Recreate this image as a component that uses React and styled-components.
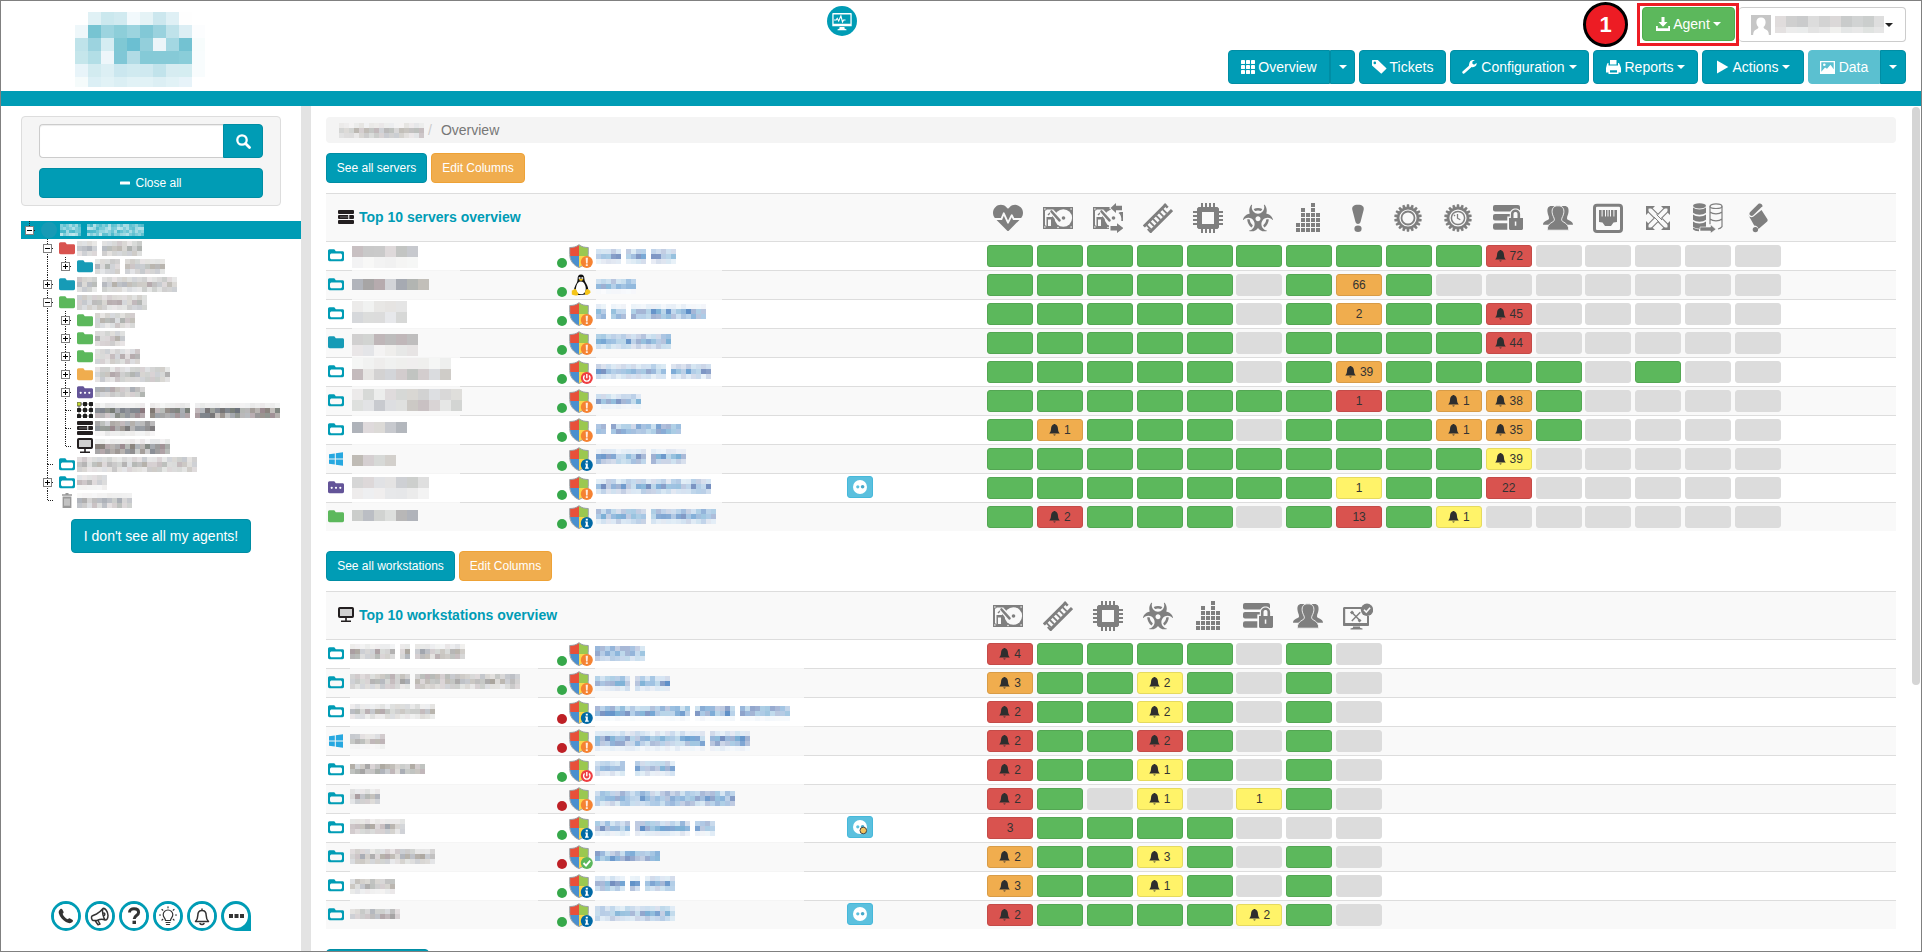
import React from 'react';
import styled, { createGlobalStyle } from 'styled-components';
import { FaHeartbeat, FaBiohazard } from 'react-icons/fa';

const TEAL = '#009cb5';
const TEAL_EDGE = '#008da4';
const INK = '#7f7f7f';
const PAPER = '#f9f9f9';

const GlobalStyle = createGlobalStyle`
  *, *::before, *::after { box-sizing: border-box; }
  html, body { margin: 0; padding: 0; background: #fff; overflow: hidden; }
  body { font-family: "Liberation Sans", Arial, sans-serif; font-size: 14px; line-height: 20px; color: #333; }
  svg { display: block; flex: none; }
`;

/* ---------- page frame ---------- */
const Page = styled.div`
  width: 1922px;
  height: 952px;
  border: 1px solid #808080;
  display: flex;
  flex-direction: column;
  overflow: hidden;
`;
const Header = styled.header`
  height: 90px;
  flex: none;
  display: flex;
  justify-content: space-between;
  padding: 0 15px 0 74px;
`;
const LogoSlot = styled.div` padding-top: 11px; width: 752px; `;
const StatusDisc = styled.div`
  width: 30px;
  height: 30px;
  margin-top: 5px;
  border-radius: 50%;
  background: ${TEAL};
  display: flex;
  align-items: center;
  justify-content: center;
`;
const HeaderRight = styled.div`
  margin-left: auto;
  display: flex;
  flex-direction: column;
  align-items: flex-end;
`;
const TopLine = styled.div`
  display: flex;
  height: 49px;
  align-items: flex-start;
  padding-top: 1px;
`;
const NavLine = styled.nav` display: flex; gap: 4px; `;
const Band = styled.div` height: 15px; flex: none; background: ${TEAL}; `;
const Body = styled.div` flex: 1; min-height: 0; display: flex; `;

/* ---------- buttons ---------- */
const tones = {
  teal: [TEAL, TEAL_EDGE, '#fff'],
  light: ['#5bc0d0', '#5bc0d0', '#fff'],
  orange: ['#f0ad4e', '#eea236', '#fff'],
  green: ['#5cb85c', '#4cae4c', '#fff'],
};
const Button = styled.button`
  display: inline-flex;
  align-items: center;
  justify-content: center;
  gap: ${(p) => p.$gap ?? 4}px;
  width: ${(p) => p.$w}px;
  height: ${(p) => (p.$small ? 30 : 34)}px;
  padding: 0;
  font: ${(p) => (p.$small ? '12px/18px' : '14px/20px')} "Liberation Sans", Arial, sans-serif;
  white-space: nowrap;
  background: ${(p) => tones[p.$tone || 'teal'][0]};
  border: 1px solid ${(p) => tones[p.$tone || 'teal'][1]};
  color: ${(p) => tones[p.$tone || 'teal'][2]};
  border-radius: ${(p) => p.$radius || '4px'};
`;
const Split = styled.div` display: flex; `;
const Caret = styled.i`
  border: 4px solid transparent;
  border-top-color: ${(p) => p.$color || '#fff'};
  border-bottom: 0;
`;
const StepBadge = styled.div`
  width: 45px;
  height: 45px;
  border-radius: 50%;
  border: 3px solid #000;
  background: #ed1c24;
  color: #fff;
  font: bold 22px/40px "Liberation Sans", Arial, sans-serif;
  text-align: center;
  margin-right: 9px;
`;
const Highlight = styled.div`
  border: 3px solid #ed1c24;
  height: 43px;
  width: 102px;
  margin-top: 1px;
  padding: 1px 1px 1px 2px;
  display: flex;
  justify-content: center;
`;
const UserButton = styled.div`
  width: 167px;
  height: 35px;
  margin-top: 5px;
  border: 1px solid #ccc;
  border-left: 0;
  border-radius: 4px;
  display: flex;
  align-items: center;
  padding-left: 12px;
`;
const UserName = styled.div` margin: 0 1px 0 4px; `;

/* ---------- sidebar ---------- */
const Sidebar = styled.aside`
  width: 300px;
  flex: none;
  display: flex;
  flex-direction: column;
  padding-top: 10px;
`;
const SearchPanel = styled.div`
  margin-left: 20px;
  width: 260px;
  height: 90px;
  padding: 7px 17px;
  background: #f5f5f5;
  border: 1px solid #ddd;
  border-radius: 4px;
  display: flex;
  flex-direction: column;
  gap: 10px;
`;
const SearchRow = styled.div` display: flex; `;
const SearchInput = styled.input`
  width: 184px;
  height: 34px;
  background: #fff;
  border: 1px solid #ccc;
  border-right: 0;
  border-radius: 4px 0 0 4px;
  box-shadow: inset 0 1px 1px rgba(0, 0, 0, 0.075);
`;
const Tree = styled.div` margin: 15px 0 10px 20px; `;
const TreeRow = styled.div`
  display: flex;
  height: 18px;
  align-items: center;
  background: ${(p) => (p.$root ? TEAL : 'transparent')};
`;
const TreeIcon = styled.div` width: 20px; flex: none; padding: 0 2px; display: flex; justify-content: center; `;
const RootDisc = styled.div`
  width: 16px; height: 16px; border-radius: 50%; background: #189ab5; margin-left: 2px; margin-right: 3px;
`;
const AgentsSlot = styled.div` padding-left: 70px; `;
const Dock = styled.div` margin-top: auto; padding: 0 0 20px 50px; display: flex; gap: 4px; `;
const DockItem = styled.div`
  width: 30px;
  height: 30px;
  border: 3px solid ${TEAL};
  border-radius: ${(p) => (p.$corner ? '50% 50% 0 50%' : '50%')};
  background: ${(p) => (p.$corner ? TEAL : '#fff')};
  display: flex;
  align-items: center;
  justify-content: center;
`;
const DockInner = styled.div`
  width: 24px; height: 24px; border-radius: 50%; background: #fff;
  display: flex; align-items: center; justify-content: center;
`;
const Divider = styled.div` width: 10px; flex: none; background: #e3e3e3; `;

/* ---------- main ---------- */
const Main = styled.main`
  flex: 1;
  padding: 11px 16px 0 15px;
  overflow: hidden;
`;
const ScrollTrack = styled.div` width: 9px; flex: none; padding-top: 1px; `;
const ScrollThumb = styled.div` width: 8px; height: 578px; border-radius: 4px; background: #d5d5d5; `;
const Breadcrumb = styled.div`
  height: 26px;
  background: #f4f4f4;
  border-radius: 4px;
  padding-left: 13px;
  display: flex;
  align-items: center;
  color: #777;
`;
const Slash = styled.span` color: #ccc; margin: 0 9px 0 4px; `;
const ButtonRow = styled.div` display: flex; gap: 4px; margin: ${(p) => p.$top}px 0 10px; `;
const TableHead = styled.div`
  height: 48px;
  border-top: 1px solid #ddd;
  background: ${PAPER};
  display: flex;
`;
const Title = styled.div`
  width: 667px;
  flex: none;
  padding: 0 0 2px 12px;
  display: flex;
  align-items: center;
  gap: 5px;
  color: ${TEAL};
  font-weight: bold;
`;
const HeadIcon = styled.div` width: 50px; flex: none; padding-top: 9px; color: ${INK}; `;
const Row = styled.div`
  display: grid;
  grid-template-columns: ${(p) => p.$cols};
  height: 29px;
  background: ${(p) => (p.$odd ? PAPER : '#fff')};
`;
const Cell = styled.div`
  border-top: 1px solid ${(p) => (p.$masked ? '#f5f5f5' : '#ddd')};
  padding-top: ${(p) => p.$top || 0}px;
  padding-left: ${(p) => p.$left || 0}px;
  min-width: 0;
`;
const Machine = styled(Cell)` display: flex; align-items: flex-start; `;
const ShieldSlot = styled.div` width: 24px; padding-top: 2px; `;
const Dot = styled.span`
  width: 10px; height: 10px; border-radius: 50%;
  margin: 16px 2px 0 0;
  background: ${(p) => (p.$off ? '#be2026' : '#36a84a')};
`;
const Strip = styled(Cell)` display: flex; padding-top: 3px; `;
const Slot = styled.div` width: 49.87px; flex: none; `;
const boxTones = {
  g: ['#5cb85c', '#53a653'],
  x: ['#dcdcdc', '#dcdcdc'],
  o: ['#f0ad4e', '#d89c47'],
  r: ['#d9534f', '#c44b48'],
  y: ['#fff369', '#e5da5f'],
};
const StatusBox = styled.div`
  width: 46px;
  height: 22px;
  border-radius: 3px;
  background: ${(p) => boxTones[p.$tone][0]};
  border: 1px solid ${(p) => boxTones[p.$tone][1]};
  display: flex;
  align-items: center;
  justify-content: center;
  gap: 4px;
  font-size: 12px;
  line-height: 20px;
  color: #333;
`;
const BotButton = styled.div`
  width: 26px; height: 22px; margin-top: 2px;
  border: 1px solid #46b8da; border-radius: 3px; background: #5bc0de;
  display: flex; align-items: center; justify-content: center;
`;

/* ---------- redacted labels ---------- */
const rng = (seed) => {
  let s = (seed * 9301 + 49297) % 233280;
  return () => {
    s = (s * 9301 + 49297) % 233280;
    return s / 233280;
  };
};
const mix = (c, k) => `rgb(${c.map((v) => Math.round(255 - (255 - v) * k)).join(',')})`;
const inks = {
  gray: [[110, 108, 108], [120, 112, 100], [105, 112, 125], [120, 100, 105], [112, 118, 112]],
  dark: [[60, 58, 60], [80, 70, 62], [60, 68, 80], [85, 58, 66], [70, 78, 70]],
  blue: [[40, 105, 180], [60, 130, 195], [70, 105, 170], [80, 150, 200]],
};
function Mosaic({ cols, rows, seed, cell = 5, ink = 'gray', gaps = [], light }) {
  const r = rng(seed);
  const out = [];
  rows.forEach((k, y) => {
    for (let x = 0; x < cols; x++) {
      const a = r();
      const b = r();
      if (gaps.includes(x)) continue;
      const set = inks[ink];
      const strength = k * (0.5 + a * 0.75);
      out.push(
        <rect
          key={`${x}-${y}`}
          x={x * cell}
          y={y * cell}
          width={cell}
          height={cell}
          fill={light ? `rgba(255,255,255,${strength})` : mix(set[Math.floor(b * set.length)], strength)}
        />
      );
    }
  });
  return (
    <svg width={cols * cell} height={rows.length * cell} shapeRendering="crispEdges">{out}</svg>
  );
}

const logoCells = [
  ['', '#e0f1f5', '#cbe8ee', '#d1eaf0', '#f2f9fc', '#e5f3f6', '#cce7ee', '#dff0f5', '#fefefe', ''],
  ['#eef7fa', '#77c4d2', '#9cd4df', '#8dced9', '#9cd4df', '#82c8d6', '#9ad2de', '#bfe2ea', '#dceef4', '#fcfdfe'],
  ['#bfe3ea', '#9cd3df', '#d5edf2', '#7fc8d4', '#6bbfd2', '#93cfdb', '#ecf5f9', '#a3d7e2', '#73c2d2', '#f7fcfc'],
  ['#c5e6eb', '#b2dee6', '#eef6fa', '#80c7d6', '#b1dbe5', '#85cad7', '#86cad7', '#86cad7', '#8acdd9', '#f8fcfd'],
  ['#e8f4f9', '#d2ebf0', '#dceff4', '#cbe7ef', '#d0eaf0', '#cfe9f0', '#c1e3eb', '#d6ecf1', '#d5edf1', '#f8fcfd'],
  ['#f5fbfb', '#dbeff5', '#e1f2f6', '#dbeff4', '#e1f2f6', '#e1f2f6', '#dceff4', '#e1f2f6', '#e7f3f9', ''],
];
const Logo = () => (
  <svg width="130" height="75" shapeRendering="crispEdges">
    {logoCells.map((row, y) =>
      row.map((c, x) => (c ? <rect key={`${x}-${y}`} x={x * 13} y={y * 13} width="13" height="13" fill={c} /> : null))
    )}
  </svg>
);
const userCells = [
  ['#e0dcdc', '#cfcfcf', '#cacbcc', '#dcdcdc', '#d3d3d3', '#dbd8d8', '#c9cbcb', '#d1d3d3', '#cbcecd', '#dedede'],
  ['#e4e1e1', '#ececec', '#eaecec', '#e3e3e3', '#e7e7e7', '#f0f0ee', '#e4e6e6', '#e8e8e8', '#e0e3e1', '#e6e6e6'],
];
const UserMosaic = () => (
  <svg width="109" height="17" shapeRendering="crispEdges">
    {userCells.map((row, y) =>
      row.map((c, x) => <rect key={`${x}-${y}`} x={x * 11} y={y * 11} width="11" height="11" fill={c} />)
    )}
  </svg>
);

/* ---------- small icons ---------- */
const ThIcon = () => (
  <svg width="14" height="14" fill="#fff">
    {[0, 5, 10].map((y) => [0, 5, 10].map((x) => <rect key={`${x}${y}`} x={x} y={y} width="4" height="4" rx=".4" />))}
  </svg>
);
const TagIcon = () => (
  <svg width="15" height="14" viewBox="0 0 15 14">
    <path fill="#fff" fillRule="evenodd" d="M.6 0h5.200l8.800 8.400-5.300 5.400L0 5.400V.6C0 .2.2 0 .6 0zM2.800 1.600a1.300 1.300 0 1 0 0 2.600 1.300 1.300 0 0 0 0-2.600z" />
  </svg>
);
const WrenchIcon = () => (
  <svg width="15" height="14" viewBox="0 0 15 14">
    <path d="M1.700 12.300 9 5.800" stroke="#fff" strokeWidth="2.800" strokeLinecap="round" />
    <path fill="#fff" d="M14.600 3.100 12 4.700 10.300 3.400l.2-2L13 0C10.600-.5 7.600.4 7.300 3.500L6.800 5.500 9 7c2.800.7 6.100-1.100 5.600-3.900z" />
  </svg>
);
const PrintIcon = () => (
  <svg width="15" height="14" viewBox="0 0 15 14">
    <path fill="#fff" fillRule="evenodd" d="M4 0h6.500v4.500H4zM2.500 3v2.500H12V3c1 0 1.300.4 1.600 1.300L15 8v4.400h-2.500V14h-10v-1.600H0V8l1-3.700C1.200 3.300 1.700 3 2.500 3zM4 10.300v2.200h7v-2.200z" />
  </svg>
);
const PlayIcon = () => (
  <svg width="13" height="14" viewBox="0 0 13 14"><path fill="#fff" d="M1 .6 12.300 7 1 13.400z" /></svg>
);
const PictureIcon = () => (
  <svg width="15" height="13" viewBox="0 0 15 13">
    <path fill="#fff" fillRule="evenodd" d="M0 0h15v13H0zM1.300 1.300v9.500L5 6.600l2 1.200 3.500-4 3.200 4.500v-7z" />
    <circle cx="4.300" cy="3.800" r="1.300" fill="#fff" />
  </svg>
);
const DownloadIcon = () => (
  <svg width="14" height="14" viewBox="0 0 14 14">
    <path fill="#fff" d="M5.500 0h3v5h3L7 9.800 2.500 5h3zM0 9h1.800v2.300h10.400V9H14v5H0z" />
  </svg>
);
const SearchIcon = () => (
  <svg width="15" height="15" viewBox="0 0 15 15" fill="none" stroke="#fff">
    <circle cx="6" cy="6" r="4.700" strokeWidth="2.300" /><path d="m9.500 9.500 4 4" strokeWidth="2.800" strokeLinecap="round" />
  </svg>
);
const MinusIcon = () => <svg width="11" height="4"><rect width="10" height="3" y=".5" rx=".5" fill="#fff" /></svg>;
const Avatar = () => (
  <svg width="20" height="20" viewBox="0 0 20 20">
    <rect width="20" height="20" fill="#c6c6c6" />
    <path fill="#fff" d="M10 2.500c3 0 4.600 2 4.600 4.700 0 2.200-1 3.900-2.100 4.900.2 1.600 1.200 2 3.200 3 1.500.8 2 2.400 2.200 4.900H2.100c.2-2.500.8-4.100 2.200-4.900 2-1 3-1.400 3.200-3-1.100-1-2.100-2.700-2.100-4.900C5.400 4.500 7 2.500 10 2.500z" />
  </svg>
);
const MonitorPulse = () => (
  <svg width="20" height="19" viewBox="0 0 20 19">
    <path fill="#fff" fillRule="evenodd" d="M1 1h18c.4 0 .7.3.7.7v12.600H.3V1.700C.3 1.300.6 1 1 1zm.6 1.400v9.300h16.800V2.400z" />
    <path d="M2 8h2.200l1-1.700L6.700 9l2.200-5 1.600 6 1-2h2" fill="none" stroke="#fff" strokeWidth="1.100" />
    <path fill="#fff" d="M7.500 15h5v1.500l2 1v.8h-9v-.8l2-1z" />
  </svg>
);
const BellGlyph = () => (
  <svg width="11" height="12" viewBox="0 0 11 12">
    <path fill="#2e2e2e" d="M4.800.3c.4-.4 1-.4 1.400 0 2 .6 2.600 2.400 2.800 4.600.1 2 .6 3.100 1.800 4.600H.2c1.200-1.500 1.700-2.600 1.800-4.600C2.200 2.700 2.800.9 4.800.3zM4.300 10.500h2.400c-.2.7-.6 1-1.200 1s-1-.3-1.200-1z" />
  </svg>
);
const Folder = ({ color = TEAL, open, dots }) => (
  <svg width="16" height="13" viewBox="0 0 16 13">
    <path fill={color} fillRule="evenodd" d={
      'M1.500.3h4.800l1.500 2h6.700c1 0 1.500.6 1.500 1.500v6.700c0 1-.6 1.700-1.600 1.700H1.700C.7 12.200 0 11.500 0 10.500V2C0 1 .6.3 1.500.3z' +
      (open ? 'M4 4.500C2.600 4.500 2 5 2 6.300v1.900c0 1.400.7 2 2 2h8c1.400 0 2-.6 2-2V6.300c0-1.300-.6-1.800-2-1.800z' : '')
    } />
    {dots && <g fill="#fff"><circle cx="3.700" cy="6.800" r="1.100" /><circle cx="8" cy="6.800" r="1.100" /><circle cx="12.300" cy="6.800" r="1.100" /></g>}
  </svg>
);
const WindowsLogo = () => (
  <svg width="16" height="14" viewBox="0 0 16 14" fill="#27a8e0">
    <path d="M1 2.300 6.800 1.400v5.100H1zM7.800 1.200 15 .2v6.300H7.800zM1 7.500h5.800v5.100L1 11.700zM7.800 7.500H15v6.300l-7.200-1z" />
  </svg>
);
const folderKinds = {
  open: <Folder open />,
  solid: <Folder color="#169bb6" />,
  red: <Folder color="#d9534f" />,
  green: <Folder color="#5cb85c" />,
  orange: <Folder color="#f0ad4e" />,
  dots: <Folder color="#635498" dots />,
  win: <WindowsLogo />,
};
const ServerIcon = () => (
  <svg width="16" height="14" viewBox="0 0 16 14">
    <g fill="#231f20"><rect width="16" height="4" rx="1" /><rect y="5" width="16" height="4" rx="1" /><rect y="10" width="16" height="4" rx="1" /></g>
    <path stroke="#fff" strokeWidth=".8" d="M2 7h8.500v-1.800" fill="none" opacity=".4" /><path stroke="#fff" d="M10.800 5v4" />
  </svg>
);
const MonitorIcon = () => (
  <svg width="16" height="16" viewBox="0 0 16 16">
    <rect x="1" y="1" width="14" height="9" rx=".8" fill="#d0d0d0" stroke="#231f20" strokeWidth="2" />
    <path stroke="#231f20" strokeWidth="1.600" d="M8 10.500V14M3 14.200h10" />
  </svg>
);
const ClusterIcon = () => (
  <svg width="16" height="16" viewBox="0 0 16 16">
    <path d="M2 2h12v12H2zM2 8h12M8 2v12" fill="none" stroke="#777" />
    {[0, 6, 12].map((y) => [0, 6, 12].map((x) => (
      <rect key={`${x}-${y}`} x={x} y={y} width="4" height="4" rx=".6" fill={x + y ? '#1d1d1d' : '#c3d82d'} stroke={x + y ? 'none' : '#555'} />
    )))}
  </svg>
);
const TrashIcon = () => (
  <svg width="10" height="15" viewBox="0 0 10 15" fill="#999">
    <path d="M3.500 0h3v1.200H10v1.500H0V1.200h3.500z" />
    <path fillRule="evenodd" d="M.6 3.600h8.800V15H.6zM2.600 5.500v7.300h.8V5.500zm2 0v7.300h.8V5.500zm2 0v7.300h.8V5.500z" />
  </svg>
);
const Badge = ({ kind }) => {
  const fill = { warn: '#f58232', info: '#0069a5', power: '#ee3e42', ok: '#5bb75b' }[kind];
  return (
    <g transform="translate(17.800 18)">
      <circle r="6" fill={fill} />
      {kind === 'warn' && <path d="M-1.100-4.200h2.200L.8 1.500H-.8zM-1 2.300h2v1.600h-2z" fill="#fff" opacity=".85" />}
      {kind === 'info' && <path d="M-1-4.200h2v1.700h-2zM-1.700-1.500H1v4h.9v1.200h-3.700V2.500H-1V-.4h-.7z" fill="#fff" />}
      {kind === 'power' && <g fill="none" stroke="#fff" strokeWidth="1.400"><path d="M-2.200-2.400a3.200 3.200 0 1 0 4.400 0" /><path d="M0-4V.3" /></g>}
      {kind === 'ok' && <path d="m-3.300 0 2.500 2.600 4.200-5" fill="none" stroke="#fff" strokeWidth="1.900" />}
    </g>
  );
};
const Shield = ({ badge }) => (
  <svg width="24" height="24" viewBox="0 0 24 24">
    <path fill="#e8503a" d="M10 .8C7.500 3 4 3.500.8 3.500L1 12h9z" />
    <path fill="#9bc850" d="M10 .8C12.500 3 16 3.500 19.200 3.500L19 12h-9z" />
    <path fill="#4a8fce" d="M1 12c.3 5 4 9.500 9 11.500V12z" />
    <path fill="#fbd64b" d="M19 12c-.3 5-4 9.500-9 11.500V12z" />
    <path fill="none" stroke="#9aa0a6" d="M10 .7C7.500 2.900 4 3.500.7 3.500v7C.8 16.500 4.300 21.300 10 23.500c5.700-2.200 9.200-7 9.300-13v-7C16 3.500 12.500 2.900 10 .7z" />
    <Badge kind={badge} />
  </svg>
);
const Tux = () => (
  <svg width="24" height="24" viewBox="0 0 24 24">
    <path fill="#111" d="M12 1.500c2.400 0 3.400 1.700 3.400 4.300 0 2.700 1.500 4 2.700 6.500 1.400 3 1.600 6.300.5 8.300-1 1.700-11.500 2-13 .2-1.200-1.600-.8-5 .6-8 1-2.200 2.500-3.800 2.400-6.800-.1-2.700 1-4.500 3.400-4.500z" />
    <path fill="#fff" d="M11.800 8.500c2.400 0 3.400 1.400 4.400 3.900 1.200 3.200.9 8.400-4 8.900-4.900.2-5.900-4.800-4.800-8.300C8.300 10 9.500 8.500 11.800 8.500z" />
    <circle cx="10.600" cy="5" r="1.100" fill="#ddd" /><circle cx="13.300" cy="5" r="1.100" fill="#ddd" />
    <path fill="#f5c518" d="M9.800 6.500c1.300-1 3-1 4.400 0-.8 1.700-3.400 1.900-4.400 0zM2.800 17.500c1.700 0 2.600-2 3.900-1.600l2.700 4.900c-.6 2.600-3 1.900-6.600.8zM21.200 17.500c-1.500 0-1.900-1.900-3.200-1.500-1 .2-2.300 2-2.200 5 1.200 2 2.800 1.100 5.700-1.300z" />
  </svg>
);
const Bot = ({ locked }) => (
  <svg width="16" height="16" viewBox="0 0 16 16">
    <circle cx="8" cy="8" r="7" fill="#fff" />
    <circle cx="5.800" cy="7.800" r="1.600" fill="#5bc0de" /><circle cx="10.600" cy="7.800" r="1.800" fill="#48a9c9" />
    {locked && <circle cx="11.300" cy="11.500" r="3.300" fill="#f2c35c" stroke="#444" />}
  </svg>
);

/* ---------- column icons, drawn on a 30 x 30 field ---------- */
const Glyph = ({ children }) => (
  <svg width="30" height="30" viewBox="0 0 30 30" fill={INK}>{children}</svg>
);
const DiskBase = () => (
  <>
    <path fillRule="evenodd" d="M0 4h30v22H0zM2 6.500v17h26v-17z" />
    <path d="M12 5h16.500v20H9V14z" />
    <circle cx="20.300" cy="15" r="8.800" fill={PAPER} />
    <path d="M3.500 14h6l1.500 11H3.500z" />
    <path d="M5 12 9.500 7.500 13 6.500" fill="none" stroke={INK} strokeWidth="1.400" />
    <path d="m9.500 9.500 6.500 7" stroke={PAPER} strokeWidth="5.400" strokeLinecap="round" />
    <path d="m8.500 8.500 8 8.800" stroke={INK} strokeWidth="2.600" strokeLinecap="round" />
    <path fill={PAPER} d="M5 16.500h3v6.500H5z" />
    <circle cx="20.500" cy="15" r="1.800" />
    <g><circle cx="1.900" cy="6" r="1.800" /><circle cx="28.100" cy="6" r="1.800" /><circle cx="1.900" cy="24" r="1.800" /><circle cx="28.100" cy="24" r="1.800" /></g>
    <g fill={PAPER}><circle cx="1.900" cy="6" r=".8" /><circle cx="28.100" cy="6" r=".8" /><circle cx="1.900" cy="24" r=".8" /><circle cx="28.100" cy="24" r=".8" /><circle cx="15" cy="24.500" r=".8" /></g>
  </>
);
const GearTeeth = () => (
  <g>
    {Array.from({ length: 18 }, (_, i) => (
      <path key={i} d="M-1.100-13.800h2.200l.6 4h-3.400z" transform={`translate(15 15) rotate(${i * 20})`} />
    ))}
    <circle cx="15" cy="15" r="11" />
  </g>
);
const columnIcons = {
  heart: <FaHeartbeat size={30} color={INK} />,
  disk: <Glyph><DiskBase /></Glyph>,
  diskIo: (
    <Glyph>
      <DiskBase />
      <path fill={PAPER} d="M16 5 23-1h7v10h-7v2zM16 20h6v-2h8v12H16z" />
      <path d="M17.500 5 23 0v2.800h6v4.400h-6V10zM17.500 23H24v-2.800l6.500 5L24 30v-2.600h-6.500z" />
      <path d="M27 9c2 2 3 4 3 7v2h-1.500c0-4-.8-6.500-3-8z" />
    </Glyph>
  ),
  ram: (
    <Glyph>
      <g transform="rotate(-45 15 15)">
        <path d="M-1 9.500h31.500v3H-1zM-1 17.800h31.500v3H-1z" />
        {[1, 5.500, 10, 14.500, 19, 23.500].map((x) => <path key={x} d={`M${x} 12h1.800v6H${x}z`} />)}
        <path d="M28 9.500h2.500v5H28zM-1 15.500h2v5h-2z" />
      </g>
    </Glyph>
  ),
  chip: (
    <Glyph>
      <path fillRule="evenodd" d="M5.500 4h19L26 5.500v19L24.500 26h-19L4 24.500v-19zM9 9v12h12V9z" />
      {[8, 12, 16, 20].map((p) => (
        <g key={p}><rect x={p} y="0" width="2" height="5" /><rect x={p} y="25" width="2" height="5" /><rect y={p} x="0" width="5" height="2" /><rect y={p} x="25" width="5" height="2" /></g>
      ))}
    </Glyph>
  ),
  bio: <FaBiohazard size={30} color={INK} />,
  bars: (
    <Glyph>
      {[2, 5, 4, 6, 4].map((n, c) => Array.from({ length: n }, (_, i) => (
        <rect key={`${c}${i}`} x={3 + c * 5} y={25 - i * 5} width="4" height="4" />
      )))}
    </Glyph>
  ),
  bang: <Glyph><path d="M15 1.800c4.500 0 6.300 2 5.700 5L17.500 19c-.6 2.500-4.400 2.500-5 0L9.300 6.800C8.700 3.800 10.500 1.800 15 1.800z" /><ellipse cx="15" cy="25.800" rx="3.600" ry="3.200" /></Glyph>,
  gear: <Glyph><GearTeeth /><circle cx="15" cy="15" r="8" fill="none" stroke={PAPER} strokeWidth="1.200" /><circle cx="15" cy="15" r="5.600" fill={PAPER} /></Glyph>,
  gearClock: (
    <Glyph>
      <GearTeeth />
      <circle cx="15" cy="15" r="8.600" fill={PAPER} />
      <circle cx="15" cy="15" r="6.600" fill="none" stroke={INK} strokeWidth="1.500" />
      <path d="M14.500 11v4.200l2.800 1.600M11 12l1 1" fill="none" stroke={INK} strokeWidth="1.300" />
    </Glyph>
  ),
  vault: (
    <Glyph>
      <rect y="2" width="27" height="6.500" rx="2" /><rect y="11" width="27" height="6.500" rx="2" /><rect y="20.300" width="22" height="6.500" rx="2" />
      <path d="M14.300 13.500h2.500v-2.500c0-7.500 11.400-7.500 11.400 0v2.500h3V28.500H14.300z" fill={PAPER} />
      <path fillRule="evenodd" d="M16 15h1.900v-4c0-6 9.200-6 9.200 0v4H30v10.500c0 .8-.7 1.500-1.500 1.500h-11c-.8 0-1.500-.7-1.500-1.500zm4.500 0h4v-4c0-2.600-4-2.600-4 0zM21.800 18.500v4.200h1.500v-4.200z" />
    </Glyph>
  ),
  users: (
    <Glyph>
      <path d="M8.500 3c-3.300 0-4.500 2.200-4 6 .3 3 1.500 4 1.500 6.500 0 2-6 2-6 6.300h9l6-8V4.500C13 3.500 10.800 3 8.500 3zM21.500 3c3.300 0 4.500 2.200 4 6-.3 3-1.500 4-1.500 6.500 0 2 6 2 6 6.300h-9l-6-8V4.500C17 3.500 19.200 3 21.500 3z" />
      <path stroke={PAPER} strokeWidth=".9" d="M15 2.800c4.500 0 6.300 2.600 5.800 7-.3 3-2.200 4.800-2.200 7 0 2.800 7.200 2.400 7.200 10.400H4.200c0-8 7.200-7.600 7.200-10.400 0-2.200-1.900-4-2.200-7-.5-4.400 1.300-7 5.800-7z" />
    </Glyph>
  ),
  ethernet: (
    <Glyph>
      <rect x="1.500" y="2.200" width="27" height="26.300" rx="2.500" fill="none" stroke={INK} strokeWidth="3" />
      <path d="M6 7h2.600v6.500h1V7H12v6.500h1V7h1.500v6.500h1V7H17v6.500h1V7h2.400v6.500h1V7H24v12l-3.500.5-2.500 3.500h-6l-2.500-3.500L6 19z" />
    </Glyph>
  ),
  exchange: (
    <Glyph>
      <path d="m5.500 5.500 19 19M24.500 5.500l-19 19" stroke={INK} strokeWidth="6.200" />
      <path d="m5.500 5.500 19 19M24.500 5.500l-19 19" stroke={PAPER} strokeWidth="4" />
      <path d="m11 14 5.500 5.500M13.500 11.500l5.500 5.500" stroke={INK} strokeWidth="1" />
      <path d="M3 3h9L9.500 5.500H5.500v4L3 12zM27 3h-9l2.500 2.500h4v4L27 12zM3 27h9l-2.500-2.500h-4v-4L3 18zM27 27h-9l2.500-2.500h4v-4L27 18z" />
    </Glyph>
  ),
  replicate: (
    <Glyph>
      <ellipse cx="6.500" cy="2.800" rx="6.500" ry="2.600" />
      {[4.500, 11.500, 18.500].map((y) => <path key={y} d={`M0 ${y}c3 2.600 10 2.600 13 0v5.200c-3 2.600-10 2.600-13 0z`} />)}
      <path d="M0 24.500c2 1 4 1.800 6 1.800v2c-3 0-5-.8-6-2z" />
      <g fill="none" stroke={INK} strokeWidth="1.200">
        <ellipse cx="23" cy="3.200" rx="6" ry="2.300" />
        <path d="M17 3.200v18M29 3.200v20.500c-1 1.500-2 2-4 2.300M17 9c3 2.600 9 2.600 12 0M17 16c3 2.600 9 2.600 12 0" />
      </g>
      <path stroke={PAPER} strokeWidth=".6" d="M7 24h10.500v-2.500l5.500 4.800-5.500 4V28H7z" />
    </Glyph>
  ),
  script: (
    <Glyph>
      <path d="M15.500.8c1.800-1.200 4.300.5 3.900 2.400L10 12.500c-1.200.8-2.800.4-3.500-1-.2-.9 0-1.800.7-2.500z" />
      <path d="M5.200 11.800c.3 2 3 3 5 2L18.500 7l5.800 9c.6 1 .4 2-.4 2.800L15.500 26c-.5-2.300-2-3.400-4.300-3.500z" />
      <circle cx="12.400" cy="26.600" r="2.700" />
    </Glyph>
  ),
  support: (
    <Glyph>
      <path fillRule="evenodd" d="M1.500 6h21v2H2.200v14H24V15h2v9c0 .6-.5 1-1 1H1c-.6 0-1-.4-1-1V7.500C0 6.600.6 6 1.500 6zM10 25.500h7v1.300l2.500.8v1H7.500v-1l2.500-.8z" />
      <circle cx="24" cy="8.800" r="6.200" />
      <path d="m21 8.800 2.300 2.300 3.800-4.300" fill="none" stroke={PAPER} strokeWidth="1.600" />
      <path d="m8.800 11.300 8.500 8.700M17.300 11.300 8.800 20" stroke={INK} strokeWidth="1.500" /><path d="m8 10.500 2 2" stroke={INK} strokeWidth="3" /><path d="m15.700 18.700 1.800 1.800" stroke={INK} strokeWidth="2.800" />
    </Glyph>
  ),
};

/* ---------- tree connectors ---------- */
const dots = { stroke: '#222', strokeWidth: 1, strokeDasharray: '1 1', shapeRendering: 'crispEdges' };
function Joint({ sign, up = true, down = true, line = true }) {
  return (
    <svg width="18" height="18">
      {up && <path d="M8.500 0v9" {...dots} />}
      {down && <path d="M8.500 9v9" {...dots} />}
      {line && <path d="M9 9.500h6" {...dots} />}
      {sign && (
        <g shapeRendering="crispEdges">
          <rect x="4.500" y="5.500" width="8" height="8" fill="#fff" stroke="#808080" />
          <path d={sign === '+' ? 'M6 9.500h5M8.500 7v5' : 'M6 9.500h5'} stroke="#000" />
        </g>
      )}
    </svg>
  );
}
const Blank = styled.div` width: 18px; flex: none; `;

const three = [0.3, 0.45, 0.3];
const tree = [
  { lvl: 1, sign: '-', icon: 'red', cols: 13, gaps: [4] },
  { lvl: 2, sign: '+', icon: 'solid', cols: 14, gaps: [5], last: true },
  { lvl: 1, sign: '+', icon: 'solid', cols: 20, gaps: [4] },
  { lvl: 1, sign: '-', icon: 'green', cols: 14 },
  { lvl: 2, sign: '+', icon: 'green', cols: 8 },
  { lvl: 2, sign: '+', icon: 'green', cols: 6 },
  { lvl: 2, sign: '+', icon: 'green', cols: 9 },
  { lvl: 2, sign: '+', icon: 'orange', cols: 15 },
  { lvl: 2, sign: '+', icon: 'dots', cols: 10, rows: [0.45, 0.45] },
  { lvl: 2, icon: 'cluster', cols: 37, gaps: [10, 19], ink: 'dark', rows: [0.1, 0.6, 0.55] },
  { lvl: 2, icon: 'server', cols: 12, ink: 'dark', rows: [0.45, 0.55, 0.1] },
  { lvl: 2, icon: 'monitor', cols: 15, ink: 'dark', rows: [0.1, 0.55, 0.5], last: true },
  { lvl: 1, icon: 'open', cols: 24 },
  { lvl: 1, sign: '+', icon: 'open', cols: 6, rows: [0.3, 0.4, 0.1] },
  { lvl: 1, icon: 'trash', cols: 11, rows: [0.1, 0.5, 0.4], last: true },
];
const treeIcons = {
  ...folderKinds, cluster: <ClusterIcon />, server: <ServerIcon />, monitor: <MonitorIcon />, trash: <TrashIcon />,
};

/* ---------- table data ---------- */
const serverCols = '26px 108px 97px 39px 126px 125px 140.1px 1fr';
const stationCols = '24px 188px 19px 38px 209px 43px 140.1px 1fr';
const servers = [
  { f: 'open', a: [6, 4, [0.35, 0.1]], b: [16, 7, [0.3, 0.6, 0.2], [5, 10]], m: 'warn', s: 'g g g g g g g g g g r*72 x x x x x' },
  { f: 'open', a: [7, 8, [0.5]], b: [8, 8, [0.4, 0.6, 0.05]], m: 'tux', s: 'g g g g g x g o66 g x x x x x x x' },
  { f: 'open', a: [5, 1, [0.15, 0.25]], b: [22, 4, [0.1, 0.6, 0.5], [2, 6]], m: 'warn', s: 'g g g g g x g o2 g g r*45 x x x x x' },
  { f: 'solid', a: [6, 5, [0.4, 0.15]], b: [15, 5, [0.4, 0.6, 0.3]], m: 'warn', s: 'g g g g g x g g g g r*44 x x x x x' },
  { f: 'open', a: [9, 0, [0.1, 0.35]], b: [23, 6, [0.3, 0.6, 0.2], [14]], m: 'power', s: 'g g g g g x g o*39 g g g g x g x x' },
  { f: 'open', a: [10, 2, [0.25, 0.35]], b: [9, 7, [0.3, 0.6, 0.1]], m: 'warn', s: 'g g g g g g g r1 g o*1 o*38 g x x x x' },
  { f: 'open', a: [5, 6, [0.45]], b: [17, 8, [0.5, 0.5], [2]], m: 'warn', s: 'g o*1 g g g x g g g o*1 o*35 g x x x x' },
  { f: 'win', a: [4, 10, [0.45]], b: [18, 4, [0.15, 0.6, 0.4], [10]], m: 'info', s: 'g g g g g g g g g g y*39 x x x x x' },
  { f: 'dots', a: [7, 3, [0.3, 0.15]], b: [23, 5, [0.3, 0.6, 0.3]], m: 'warn', bot: 1, s: 'g g g g g g g y1 g g r22 x x x x x' },
  { f: 'green', a: [6, 7, [0.45]], b: [24, 6, [0.4, 0.6, 0.25], [10]], m: 'info', s: 'g r*2 g g g x g r13 g y*1 x x x x x x' },
];
const stations = [
  { f: 'open', a: [23, 4, [0.15, 0.5, 0.4], [9, 12]], b: [10, 6, [0.4, 0.5, 0.3]], m: 'warn', s: 'r*4 g g g g x g x' },
  { f: 'open', a: [34, 5, [0.4, 0.5, 0.3], [12]], b: [15, 7, [0.4, 0.6, 0.2], [7]], m: 'warn', s: 'o*3 g g y*2 g x g x' },
  { f: 'open', a: [17, 6, [0.2, 0.5, 0.2]], b: [39, 8, [0.5, 0.6, 0.05], [19, 28]], m: 'info', off: 1, s: 'r*2 g g y*2 g x g x' },
  { f: 'win', a: [7, 7, [0.3, 0.5, 0.1]], b: [31, 4, [0.2, 0.6, 0.5, 0.1], [22]], m: 'warn', off: 1, s: 'r*2 g g r*2 g x g x' },
  { f: 'open', a: [15, 8, [0.5, 0.5]], b: [16, 5, [0.3, 0.6, 0.2], [6, 7]], m: 'power', s: 'r*2 g g y*1 g x g x' },
  { f: 'open', a: [6, 4, [0.2, 0.5, 0.3]], b: [28, 6, [0.4, 0.6, 0.4]], m: 'warn', off: 1, s: 'r*2 g x y*1 x y1 g x' },
  { f: 'open', a: [11, 5, [0.2, 0.5, 0.3]], b: [24, 7, [0.4, 0.6, 0.15], [7, 19]], m: 'info', bot: 2, s: 'r3 g g g g x x x' },
  { f: 'open', a: [17, 6, [0.3, 0.5, 0.3]], b: [13, 8, [0.6, 0.6]], m: 'ok', off: 1, s: 'o*2 g g y*3 g x g x' },
  { f: 'open', a: [9, 7, [0.35, 0.45, 0.15]], b: [16, 4, [0.2, 0.6, 0.4], [6, 9]], m: 'info', s: 'o*3 g g y*1 g x g x' },
  { f: 'open', a: [10, 8, [0.4, 0.5]], b: [16, 5, [0.3, 0.6, 0.3]], m: 'info', bot: 1, s: 'r*2 g g g g y*2 g x' },
];

function Status({ code }) {
  const bell = code[1] === '*';
  const value = code.slice(bell ? 2 : 1);
  return (
    <Slot>
      <StatusBox $tone={code[0]}>
        {bell && <BellGlyph />}
        {value && <span>{value}</span>}
      </StatusBox>
    </Slot>
  );
}

function OverviewTable({ icon, title, icons, rows, cols, folderCell, seed }) {
  return (
    <section>
      <TableHead>
        <Title>{icon}{title}</Title>
        {icons.map((k) => <HeadIcon key={k}>{columnIcons[k]}</HeadIcon>)}
      </TableHead>
      {rows.map((r, i) => (
        <Row key={i} $cols={cols} $odd={i % 2 === 1}>
          <Cell $top={7} $left={2}>{folderKinds[r.f]}</Cell>
          <Cell $masked={i > 0} $top={r.a[1]}>
            <Mosaic cols={r.a[0]} rows={r.a[2]} gaps={r.a[3]} cell={folderCell} seed={seed + i} />
          </Cell>
          <Cell />
          <Machine>
            <Dot $off={r.off} />
            <ShieldSlot>{r.m === 'tux' ? <Tux /> : <Shield badge={r.m} />}</ShieldSlot>
          </Machine>
          <Cell $masked={i > 0} $top={r.b[1]}>
            <Mosaic cols={r.b[0]} rows={r.b[2]} gaps={r.b[3]} ink="blue" seed={seed + 40 + i} />
          </Cell>
          <Cell />
          <Cell>{r.bot && <BotButton><Bot locked={r.bot === 2} /></BotButton>}</Cell>
          <Strip>{r.s.split(' ').map((c, j) => <Status key={j} code={c} />)}</Strip>
        </Row>
      ))}
    </section>
  );
}

const ic = { fill: 'none', stroke: '#333', strokeWidth: 1.5, strokeLinecap: 'round', strokeLinejoin: 'round' };
const dockIcons = [
  <svg key="p" width="18" height="18" viewBox="0 0 18 18"><path fill="#333" d="M3.200 2.200c1-.8 1.800-.5 2.300.5l1 2c.4.9 0 1.400-.9 2 .6 2.300 3 4.800 5.300 5.500.7-.9 1.300-1.300 2.200-.8l2.200 1.400c.9.6.9 1.400.1 2.200-1.600 1.500-3.500 1.600-6.500 0C5.600 13.200 2.800 9.800 1.900 6.600c-.5-1.900-.1-3.300 1.300-4.400z" /></svg>,
  <svg key="m" width="20" height="20" viewBox="0 0 20 20" {...ic}><path d="M13 2.500c2-.8 5 3 5 7 0 3-1.500 5-3 4.500-2.500-1-5-.8-7.500.3L3 14.500C1.500 14 1 11 2 10l4.500-2c3-1.500 4.500-3 6.500-5.500zM13 2.500c-1.500 3 .5 10 2.500 11.500M8 14.500l2 3.500-2 .8-3-4.300M13.500 9.500c1.300.3 2-2 .5-2.500" /></svg>,
  <svg key="q" width="14" height="18" viewBox="0 0 14 18"><path d="M2.500 5.500C2.500 2.800 4.500 1.800 7 1.800s4.600 1.200 4.600 3.600C11.600 8.600 7.200 8.400 7.200 12" fill="none" stroke="#333" strokeWidth="3" /><rect x="5.500" y="13.700" width="3.500" height="3.300" fill="#333" /></svg>,
  <svg key="b" width="20" height="20" viewBox="0 0 20 20" {...ic} strokeWidth="1.200"><path d="M7.500 14.500c0-2.300-2.300-3-2.300-5.700a4.800 4.800 0 0 1 9.600 0c0 2.700-2.300 3.400-2.300 5.700zM8 16.500h4M8.500 18.500h3M10 .8v1M2.500 9h-1M18.500 9h-1M4 3.500l.8.700M16 3.500l-.8.7M4 14l.8-.7M16 14l-.8-.7" /></svg>,
  <svg key="n" width="18" height="19" viewBox="0 0 18 19" {...ic}><path d="M2.500 14.500c1.500-1.500 2.300-3 2.300-6 0-3 1.700-5 4.200-5s4.200 2 4.200 5c0 3 .8 4.500 2.300 6zM9 3.300V2M7 16.500c1 1.300 3 1.300 4 0" /></svg>,
  <svg key="d" width="15" height="4"><path fill="#333" d="M0 0h4v4H0zM5.500 0h4v4h-4zM11 0h4v4h-4z" /></svg>,
];

export default function App() {
  return (
    <>
      <GlobalStyle />
      <Page>
        <Header>
          <LogoSlot><Logo /></LogoSlot>
          <StatusDisc><MonitorPulse /></StatusDisc>
          <HeaderRight>
            <TopLine>
              <StepBadge>1</StepBadge>
              <Highlight>
                <Button $w={93} $tone="green" $gap={3}><DownloadIcon />Agent<Caret /></Button>
              </Highlight>
              <UserButton><Avatar /><UserName><UserMosaic /></UserName><Caret $color="#222" /></UserButton>
            </TopLine>
            <NavLine>
              <Split>
                <Button $w={102} $gap={3} $radius="4px 0 0 4px"><ThIcon />Overview</Button>
                <Button $w={25} $radius="0 4px 4px 0"><Caret /></Button>
              </Split>
              <Button $w={87} $gap={3}><TagIcon />Tickets</Button>
              <Button $w={139}><WrenchIcon />Configuration<Caret /></Button>
              <Button $w={105} $gap={3}><PrintIcon />Reports<Caret /></Button>
              <Button $w={102}><PlayIcon />Actions<Caret /></Button>
              <Split>
                <Button $w={72} $tone="light" $radius="4px 0 0 4px"><PictureIcon />Data</Button>
                <Button $w={26} $radius="0 4px 4px 0"><Caret /></Button>
              </Split>
            </NavLine>
          </HeaderRight>
        </Header>
        <Band />
        <Body>
          <Sidebar>
            <SearchPanel>
              <SearchRow>
                <SearchInput readOnly aria-label="Search" />
                <Button $w={40} $radius="0 4px 4px 0"><SearchIcon /></Button>
              </SearchRow>
              <Button $small $w={224}><MinusIcon />Close all</Button>
            </SearchPanel>
            <Tree>
              <TreeRow $root>
                <Joint sign="-" down={false} />
                <RootDisc />
                <Mosaic cols={28} rows={[0.55, 0.6, 0.55, 0.6]} cell={3} gaps={[7, 8]} seed={7} light />
              </TreeRow>
              {tree.map((n, i) => (
                <TreeRow key={i}>
                  <Blank />
                  {n.lvl === 2 && <Joint line={false} />}
                  <Joint sign={n.sign} down={!n.last} />
                  <TreeIcon>{treeIcons[n.icon]}</TreeIcon>
                  <Mosaic cols={n.cols} rows={n.rows || three} gaps={n.gaps} ink={n.ink} seed={100 + i} />
                </TreeRow>
              ))}
            </Tree>
            <AgentsSlot><Button $w={180}>I don't see all my agents!</Button></AgentsSlot>
            <Dock>
              {dockIcons.map((icon, i) => (
                <DockItem key={i} $corner={i === 5}><DockInner>{icon}</DockInner></DockItem>
              ))}
            </Dock>
          </Sidebar>
          <Divider />
          <Main>
            <Breadcrumb>
              <Mosaic cols={17} rows={[0.15, 0.4, 0.3]} seed={31} />
              <Slash>/</Slash>Overview
            </Breadcrumb>
            <ButtonRow $top={10}>
              <Button $small $w={101}>See all servers</Button>
              <Button $small $w={94} $tone="orange">Edit Columns</Button>
            </ButtonRow>
            <OverviewTable
              icon={<ServerIcon />} title="Top 10 servers overview" rows={servers} cols={serverCols} folderCell={11} seed={200}
              icons={['heart', 'disk', 'diskIo', 'ram', 'chip', 'bio', 'bars', 'bang', 'gear', 'gearClock', 'vault', 'users', 'ethernet', 'exchange', 'replicate', 'script']}
            />
            <ButtonRow $top={20}>
              <Button $small $w={129}>See all workstations</Button>
              <Button $small $w={93} $tone="orange">Edit Columns</Button>
            </ButtonRow>
            <OverviewTable
              icon={<MonitorIcon />} title="Top 10 workstations overview" rows={stations} cols={stationCols} folderCell={5} seed={300}
              icons={['disk', 'ram', 'chip', 'bio', 'bars', 'vault', 'users', 'support']}
            />
            <ButtonRow $top={20}><Button $small $w={103} /></ButtonRow>
          </Main>
          <ScrollTrack><ScrollThumb /></ScrollTrack>
        </Body>
      </Page>
    </>
  );
}
